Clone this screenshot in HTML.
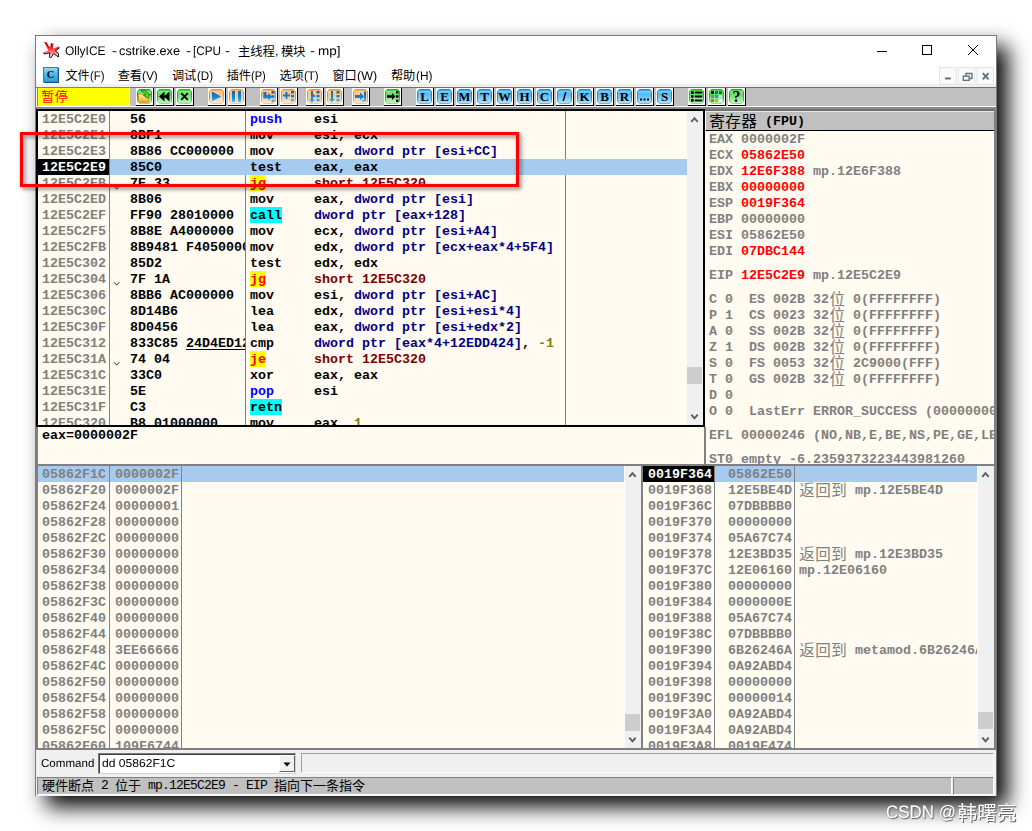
<!DOCTYPE html>
<html><head><meta charset="utf-8"><title>OllyICE</title>
<style>
html,body{margin:0;padding:0;background:#fff;}
body{width:1032px;height:831px;position:relative;overflow:hidden;font-family:"Liberation Sans",sans-serif;}
div,span{box-sizing:border-box;}
.abs,.abs>*{position:absolute;}
#shadow{position:absolute;left:35px;top:35px;width:962px;height:761px;}
#win{position:absolute;left:35px;top:35px;width:962px;height:761px;background:#f0f0f0;border:1px solid #7a7a7a;overflow:hidden;}
.p{position:absolute;}
.cjk{position:absolute;left:0;top:0;pointer-events:none;}
.cjk text{font-family:"Liberation Sans","Noto Sans CJK SC",sans-serif;}
.m{font-family:"Liberation Mono",monospace;font-weight:bold;font-size:13.333px;line-height:16px;white-space:pre;position:absolute;height:16px;letter-spacing:0;}
.row{position:absolute;left:0;height:16px;width:100%;}
.g{color:#808080}.k{color:#000}.r{color:#ff0000}.b{color:#0000ff}.n{color:#000080}.d{color:#800000}.o{color:#808000}.w{color:#fff}
.sans{font-family:"Liberation Sans",sans-serif;position:absolute;white-space:pre;text-rendering:geometricPrecision;font-kerning:none;}
.tb{position:absolute;top:88px;width:18px;height:18px;background:#fff;border-right:1px solid #000;border-bottom:1px solid #000;}
.tb>svg{position:absolute;left:1px;top:1px;}

</style></head><body>
<div id="shadow" style="box-shadow:11px 11px 20px rgba(0,0,0,0.97);"></div>
<div id="win"></div>
<div class="p" style="left:36px;top:36px;width:960px;height:27px;background:#fff;"></div>
<div class="p" style="left:36px;top:63px;width:960px;height:21px;background:#fff;"></div>
<div class="p" style="left:36px;top:84px;width:960px;height:3px;background:#f0f0f0;"></div>
<div class="p" style="left:36px;top:87px;width:960px;height:22px;background:#c0c0c0;border-top:1px solid #707070;"></div>
<div class="p" style="left:36px;top:106px;width:960px;height:1px;background:#fff;"></div>
<div class="p" style="left:36px;top:107px;width:960px;height:2px;background:#8c8c8c;"></div>
<svg class="p" style="left:43px;top:41px" width="18" height="18" viewBox="0 0 18 18">
<defs><linearGradient id="spl" x1="0" y1="0" x2="0" y2="1"><stop offset="0" stop-color="#ff0000"/><stop offset="0.4" stop-color="#ff2a2a"/><stop offset="0.75" stop-color="#ff9c9c"/><stop offset="1" stop-color="#ffecec"/></linearGradient></defs>
<path d="M1.500 1.200 L3.600 1.300 L6.800 7 L8.200 2.300 L10.300 2.500 L10 7.800 L15.800 5.400 L16.600 6.800 L12.400 9.800 L15.600 12.600 L15.400 16 L10.600 12.600 L8.200 16.600 L6.400 16.200 L6.800 11.800 L1.200 13 L0.800 11.400 L5.200 9.200 Z" fill="url(#spl)"/>
<path d="M16.600 6.800 L12.400 9.800 L15.600 12.600 L15.400 16 L10.600 12.600 L8.200 16.600 L6.400 16.200 L6.800 11.800 L1.200 13 L0.800 11.400" fill="none" stroke="#000" stroke-width="0.9" stroke-linejoin="round"/>
<path d="M1.500 1.200 L6.800 7 M8.200 2.300 L8.600 6" fill="none" stroke="#200" stroke-width="0.7"/>
</svg>
<span class="sans" style="left:65px;top:43px;font-size:12.5px;line-height:16.5px;color:#000;transform-origin:0 0;transform:scaleX(0.9560);">OllyICE</span><span class="sans" style="left:111.5px;top:43px;font-size:12.5px;line-height:16.5px;color:#000;transform-origin:0 0;transform:scaleX(1.2012);">-</span><span class="sans" style="left:119px;top:43px;font-size:12.5px;line-height:16.5px;color:#000;transform-origin:0 0;transform:scaleX(1.0211);">cstrike.exe</span><span class="sans" style="left:185.5px;top:43px;font-size:12.5px;line-height:16.5px;color:#000;transform-origin:0 0;transform:scaleX(1.2012);">-</span><span class="sans" style="left:193px;top:43px;font-size:12.5px;line-height:16.5px;color:#000;transform-origin:0 0;transform:scaleX(0.9376);">[CPU</span><span class="sans" style="left:224.5px;top:43px;font-size:12.5px;line-height:16.5px;color:#000;transform-origin:0 0;transform:scaleX(1.2012);">-</span><span class="sans" style="left:274.5px;top:43px;font-size:12.5px;line-height:16.5px;color:#000;transform-origin:0 0;transform:scaleX(1.0078);">,</span><span class="sans" style="left:309.5px;top:43px;font-size:12.5px;line-height:16.5px;color:#000;transform-origin:0 0;transform:scaleX(1.2012);">-</span><span class="sans" style="left:318px;top:43px;font-size:12.5px;line-height:16.5px;color:#000;transform-origin:0 0;transform:scaleX(1.0798);">mp]</span><svg class="p" style="left:860px;top:36px" width="136" height="27" viewBox="0 0 136 27" fill="none" stroke="#000" stroke-width="1">
<path d="M17 15.5h10"/><rect x="62.5" y="9.5" width="9" height="9"/><path d="M108 9 l10 10 M118 9 l-10 10"/></svg>
<svg class="p" style="left:43px;top:67px" width="16" height="16" viewBox="0 0 16 16">
<defs><linearGradient id="cic" x1="0" y1="0" x2="0" y2="1"><stop offset="0" stop-color="#9bd8f6"/><stop offset="0.5" stop-color="#4fb4ea"/><stop offset="1" stop-color="#2a9ee0"/></linearGradient></defs>
<rect x="1" y="1" width="15" height="15" fill="#10283c"/>
<rect x="0.5" y="0.5" width="14.500" height="14.500" fill="url(#cic)" stroke="#1585cc"/>
<text x="7.600" y="11.300" font-family="Liberation Serif" font-weight="bold" font-size="10.500" text-anchor="middle" fill="#06141e">C</text></svg>
<span class="sans" style="left:90.2px;top:68px;font-size:12.5px;line-height:16.5px;color:#000;transform-origin:0 0;transform:scaleX(0.9085);">(F)</span><span class="sans" style="left:142.4px;top:68px;font-size:12.5px;line-height:16.5px;color:#000;transform-origin:0 0;transform:scaleX(0.9482);">(V)</span><span class="sans" style="left:196.70000000000002px;top:68px;font-size:12.5px;line-height:16.5px;color:#000;transform-origin:0 0;transform:scaleX(0.9278);">(D)</span><span class="sans" style="left:251.4px;top:68px;font-size:12.5px;line-height:16.5px;color:#000;transform-origin:0 0;transform:scaleX(0.8882);">(P)</span><span class="sans" style="left:304.3px;top:68px;font-size:12.5px;line-height:16.5px;color:#000;transform-origin:0 0;transform:scaleX(0.9210);">(T)</span><span class="sans" style="left:357.1px;top:68px;font-size:12.5px;line-height:16.5px;color:#000;transform-origin:0 0;transform:scaleX(0.9988);">(W)</span><span class="sans" style="left:415.7px;top:68px;font-size:12.5px;line-height:16.5px;color:#000;transform-origin:0 0;transform:scaleX(0.9451);">(H)</span><svg class="p" style="left:939px;top:66px" width="57" height="20" viewBox="0 0 58 20">
<g fill="#fafafa" stroke="#e2e2e2"><rect x="0.5" y="1.5" width="17" height="17"/><rect x="19.5" y="1.5" width="17" height="17"/><rect x="38.5" y="1.5" width="17" height="17"/></g>
<g stroke="#5d7288" fill="none"><path d="M6 12.5h6" stroke-width="2"/><path d="M27.5 10.5v-3h6v5h-2" stroke-width="1.4"/><rect x="24.7" y="10.2" width="6" height="4.2" stroke-width="1.4"/><path d="M44.5 7l6 6.5M50.5 7l-6 6.5" stroke-width="2"/></g></svg>
<svg width="0" height="0" style="position:absolute"><defs><linearGradient id="blg" x1="0" y1="0" x2="0" y2="1"><stop offset="0" stop-color="#0668b8"/><stop offset="0.6" stop-color="#1088dc"/><stop offset="1" stop-color="#58c0f6"/></linearGradient></defs></svg><div class="p" style="left:37px;top:87px;width:93px;height:20px;background:#ffff00;border-top:1px solid #808080;border-left:1px solid #808080;border-bottom:1px solid #fff;border-right:1px solid #fff;"></div>
<div class="p" style="left:36px;top:88px;width:1px;height:18px;background:#fff;"></div>
<div class="tb" style="left:136px"><svg width="15" height="15" viewBox="0 0 15 15"><defs><linearGradient id="tg0" x1="0" y1="0" x2="0" y2="1"><stop offset="0" stop-color="#9ae69a"/><stop offset="0.35" stop-color="#6adb6a"/><stop offset="1" stop-color="#c4f6c4"/></linearGradient><linearGradient id="te0" x1="0" y1="0" x2="0" y2="1"><stop offset="0" stop-color="#0cc00c"/><stop offset="0.55" stop-color="#0cc00c"/><stop offset="1" stop-color="#86e486"/></linearGradient></defs><path d="M2.500 0.500h10l2 2v10l-2 2h-10l-2-2v-10z" fill="url(#tg0)" stroke="url(#te0)" stroke-width="1"/><path d="M2.300 0.200h10.400l1 1.300h-12.400z" fill="#0cc00c"/><g transform="translate(-0.5 -0.5)"><defs><linearGradient id="fld" x1="0" y1="0" x2="0" y2="1"><stop offset="0" stop-color="#fff2a8"/><stop offset="0.5" stop-color="#f8d060"/><stop offset="1" stop-color="#eaa426"/></linearGradient></defs><path d="M1.900 6.400q0-1 1-1h2.300l1 1.200h5.200q1 0 1 1v5.300q0 1-1 1h-8.500q-1 0-1-1z" fill="url(#fld)" stroke="#d08c14" stroke-width="0.9"/><path d="M5.200 1.500c3.500-0.300 6.300 1.600 6.900 4.600l1.900-0.400-2.900 4-3.900-2.900 2-0.400c-0.600-1.900-2-3.100-4.300-3.500z" fill="#5ad23a" stroke="#0e800e" stroke-width="0.9" stroke-linejoin="round"/></g></svg></div>
<div class="tb" style="left:156px"><svg width="15" height="15" viewBox="0 0 15 15"><defs><linearGradient id="tg1" x1="0" y1="0" x2="0" y2="1"><stop offset="0" stop-color="#9ae69a"/><stop offset="0.35" stop-color="#6adb6a"/><stop offset="1" stop-color="#c4f6c4"/></linearGradient><linearGradient id="te1" x1="0" y1="0" x2="0" y2="1"><stop offset="0" stop-color="#0cc00c"/><stop offset="0.55" stop-color="#0cc00c"/><stop offset="1" stop-color="#86e486"/></linearGradient></defs><path d="M2.500 0.500h10l2 2v10l-2 2h-10l-2-2v-10z" fill="url(#tg1)" stroke="url(#te1)" stroke-width="1"/><path d="M2.300 0.200h10.400l1 1.300h-12.400z" fill="#0cc00c"/><g transform="translate(-0.5 -0.5)"><path d="M8 3v10l-5.500-5zM13 3v10l-5.500-5z" fill="#000"/></g></svg></div>
<div class="tb" style="left:176px"><svg width="15" height="15" viewBox="0 0 15 15"><defs><linearGradient id="tg2" x1="0" y1="0" x2="0" y2="1"><stop offset="0" stop-color="#9ae69a"/><stop offset="0.35" stop-color="#6adb6a"/><stop offset="1" stop-color="#c4f6c4"/></linearGradient><linearGradient id="te2" x1="0" y1="0" x2="0" y2="1"><stop offset="0" stop-color="#0cc00c"/><stop offset="0.55" stop-color="#0cc00c"/><stop offset="1" stop-color="#86e486"/></linearGradient></defs><path d="M2.500 0.500h10l2 2v10l-2 2h-10l-2-2v-10z" fill="url(#tg2)" stroke="url(#te2)" stroke-width="1"/><path d="M2.300 0.200h10.400l1 1.300h-12.400z" fill="#0cc00c"/><g transform="translate(-0.5 -0.5)"><path d="M4.700 4.700l6.600 6.600M11.300 4.700l-6.600 6.600" stroke="#000" stroke-width="1.7"/></g></svg></div>
<div class="tb" style="left:208px"><svg width="15" height="15" viewBox="0 0 15 15"><defs><linearGradient id="tg3" x1="0" y1="0" x2="0" y2="1"><stop offset="0" stop-color="#fcd4a8"/><stop offset="0.35" stop-color="#fbc48c"/><stop offset="1" stop-color="#fde8d2"/></linearGradient><linearGradient id="te3" x1="0" y1="0" x2="0" y2="1"><stop offset="0" stop-color="#f0902c"/><stop offset="0.55" stop-color="#f0902c"/><stop offset="1" stop-color="#f8c890"/></linearGradient></defs><path d="M2.500 0.500h10l2 2v10l-2 2h-10l-2-2v-10z" fill="url(#tg3)" stroke="url(#te3)" stroke-width="1"/><path d="M2.300 0.200h10.400l1 1.300h-12.400z" fill="#f0902c"/><g transform="translate(-0.5 -0.5)"><path d="M3.500 3l9 5-9 5z" fill="url(#blg)"/></g></svg></div>
<div class="tb" style="left:228px"><svg width="15" height="15" viewBox="0 0 15 15"><defs><linearGradient id="tg4" x1="0" y1="0" x2="0" y2="1"><stop offset="0" stop-color="#fcd4a8"/><stop offset="0.35" stop-color="#fbc48c"/><stop offset="1" stop-color="#fde8d2"/></linearGradient><linearGradient id="te4" x1="0" y1="0" x2="0" y2="1"><stop offset="0" stop-color="#f0902c"/><stop offset="0.55" stop-color="#f0902c"/><stop offset="1" stop-color="#f8c890"/></linearGradient></defs><path d="M2.500 0.500h10l2 2v10l-2 2h-10l-2-2v-10z" fill="url(#tg4)" stroke="url(#te4)" stroke-width="1"/><path d="M2.300 0.200h10.400l1 1.300h-12.400z" fill="#f0902c"/><g transform="translate(-0.5 -0.5)"><path d="M3.500 2.500h3v11h-3zM9.500 2.500h3v11h-3z" fill="url(#blg)"/></g></svg></div>
<div class="tb" style="left:260px"><svg width="15" height="15" viewBox="0 0 15 15"><defs><linearGradient id="tg5" x1="0" y1="0" x2="0" y2="1"><stop offset="0" stop-color="#fcd4a8"/><stop offset="0.35" stop-color="#fbc48c"/><stop offset="1" stop-color="#fde8d2"/></linearGradient><linearGradient id="te5" x1="0" y1="0" x2="0" y2="1"><stop offset="0" stop-color="#f0902c"/><stop offset="0.55" stop-color="#f0902c"/><stop offset="1" stop-color="#f8c890"/></linearGradient></defs><path d="M2.500 0.500h10l2 2v10l-2 2h-10l-2-2v-10z" fill="url(#tg5)" stroke="url(#te5)" stroke-width="1"/><path d="M2.300 0.200h10.400l1 1.300h-12.400z" fill="#f0902c"/><g transform="translate(-0.5 -0.5)"><path d="M2.800 3.500h3.200v3h2v-2.500l3.300 4.200-3.300 4.200v-2.500h-5.200zM11 2.500h3v2.700h-3zM11 6.800h3v2.700h-3zM11 11h3v2.700h-3z" fill="url(#blg)"/></g></svg></div>
<div class="tb" style="left:280px"><svg width="15" height="15" viewBox="0 0 15 15"><defs><linearGradient id="tg6" x1="0" y1="0" x2="0" y2="1"><stop offset="0" stop-color="#fcd4a8"/><stop offset="0.35" stop-color="#fbc48c"/><stop offset="1" stop-color="#fde8d2"/></linearGradient><linearGradient id="te6" x1="0" y1="0" x2="0" y2="1"><stop offset="0" stop-color="#f0902c"/><stop offset="0.55" stop-color="#f0902c"/><stop offset="1" stop-color="#f8c890"/></linearGradient></defs><path d="M2.500 0.500h10l2 2v10l-2 2h-10l-2-2v-10z" fill="url(#tg6)" stroke="url(#te6)" stroke-width="1"/><path d="M2.300 0.200h10.400l1 1.300h-12.400z" fill="#f0902c"/><g transform="translate(-0.5 -0.5)"><path d="M5 3.500h2v2.500h2.500v2h-2.500v2.500h-2v-2.500h-2.500v-2h2.500zM10.500 2.500h3v2.500h-3zM10.500 6.500h3v2.500h-3zM10.500 10.500h3v2.500h-3z" fill="url(#blg)"/></g></svg></div>
<div class="tb" style="left:306px"><svg width="15" height="15" viewBox="0 0 15 15"><defs><linearGradient id="tg7" x1="0" y1="0" x2="0" y2="1"><stop offset="0" stop-color="#fcd4a8"/><stop offset="0.35" stop-color="#fbc48c"/><stop offset="1" stop-color="#fde8d2"/></linearGradient><linearGradient id="te7" x1="0" y1="0" x2="0" y2="1"><stop offset="0" stop-color="#f0902c"/><stop offset="0.55" stop-color="#f0902c"/><stop offset="1" stop-color="#f8c890"/></linearGradient></defs><path d="M2.500 0.500h10l2 2v10l-2 2h-10l-2-2v-10z" fill="url(#tg7)" stroke="url(#te7)" stroke-width="1"/><path d="M2.300 0.200h10.400l1 1.300h-12.400z" fill="#f0902c"/><g transform="translate(-0.5 -0.5)"><path d="M4.500 2.500h2v3l2.500 2-1 1.500-1.500-1v3h2l-3 3.500-3-3.500h2zM10 2.500h3v2.500h-3zM10 6.500h3v2.500h-3zM10 10.500h3v2.500h-3z" fill="url(#blg)"/></g></svg></div>
<div class="tb" style="left:326px"><svg width="15" height="15" viewBox="0 0 15 15"><defs><linearGradient id="tg8" x1="0" y1="0" x2="0" y2="1"><stop offset="0" stop-color="#fcd4a8"/><stop offset="0.35" stop-color="#fbc48c"/><stop offset="1" stop-color="#fde8d2"/></linearGradient><linearGradient id="te8" x1="0" y1="0" x2="0" y2="1"><stop offset="0" stop-color="#f0902c"/><stop offset="0.55" stop-color="#f0902c"/><stop offset="1" stop-color="#f8c890"/></linearGradient></defs><path d="M2.500 0.500h10l2 2v10l-2 2h-10l-2-2v-10z" fill="url(#tg8)" stroke="url(#te8)" stroke-width="1"/><path d="M2.300 0.200h10.400l1 1.300h-12.400z" fill="#f0902c"/><g transform="translate(-0.5 -0.5)"><path d="M4.500 2.500h2v8h2l-3 3.500-3-3.500h2zM10 2.500h3v2.500h-3zM10 6.500h3v2.500h-3zM10 10.500h3v2.500h-3z" fill="url(#blg)"/></g></svg></div>
<div class="tb" style="left:352px"><svg width="15" height="15" viewBox="0 0 15 15"><defs><linearGradient id="tg9" x1="0" y1="0" x2="0" y2="1"><stop offset="0" stop-color="#fcd4a8"/><stop offset="0.35" stop-color="#fbc48c"/><stop offset="1" stop-color="#fde8d2"/></linearGradient><linearGradient id="te9" x1="0" y1="0" x2="0" y2="1"><stop offset="0" stop-color="#f0902c"/><stop offset="0.55" stop-color="#f0902c"/><stop offset="1" stop-color="#f8c890"/></linearGradient></defs><path d="M2.500 0.500h10l2 2v10l-2 2h-10l-2-2v-10z" fill="url(#tg9)" stroke="url(#te9)" stroke-width="1"/><path d="M2.300 0.200h10.400l1 1.300h-12.400z" fill="#f0902c"/><g transform="translate(-0.5 -0.5)"><path d="M2.500 6.500h5v-2.500l4 4-4 4v-2.500h-5zM11.500 3h2v10h-4v-1.500h2z" fill="url(#blg)"/></g></svg></div>
<div class="tb" style="left:384px"><svg width="15" height="15" viewBox="0 0 15 15"><defs><linearGradient id="tg10" x1="0" y1="0" x2="0" y2="1"><stop offset="0" stop-color="#9ae69a"/><stop offset="0.35" stop-color="#6adb6a"/><stop offset="1" stop-color="#c4f6c4"/></linearGradient><linearGradient id="te10" x1="0" y1="0" x2="0" y2="1"><stop offset="0" stop-color="#0cc00c"/><stop offset="0.55" stop-color="#0cc00c"/><stop offset="1" stop-color="#86e486"/></linearGradient></defs><path d="M2.500 0.500h10l2 2v10l-2 2h-10l-2-2v-10z" fill="url(#tg10)" stroke="url(#te10)" stroke-width="1"/><path d="M2.300 0.200h10.400l1 1.300h-12.400z" fill="#0cc00c"/><g transform="translate(-0.5 -0.5)"><path d="M2.500 6.800h5v-2.300l3.500 3.500-3.500 3.500v-2.300h-5zM11.500 2.500h2.500v2.500h-2.500zM11.500 6.700h2.500v2.500h-2.500zM11.500 11h2.500v2.500h-2.500z" fill="#000"/></g></svg></div>
<div class="tb" style="left:416px"><svg width="15" height="15" viewBox="0 0 15 15"><defs><linearGradient id="tg11" x1="0" y1="0" x2="0" y2="1"><stop offset="0" stop-color="#8cd2f6"/><stop offset="0.35" stop-color="#56baf0"/><stop offset="1" stop-color="#b6e2fa"/></linearGradient><linearGradient id="te11" x1="0" y1="0" x2="0" y2="1"><stop offset="0" stop-color="#0f8cdc"/><stop offset="0.55" stop-color="#0f8cdc"/><stop offset="1" stop-color="#5cb8ee"/></linearGradient></defs><path d="M2.500 0.500h10l2 2v10l-2 2h-10l-2-2v-10z" fill="url(#tg11)" stroke="url(#te11)" stroke-width="1"/><path d="M2.300 0.200h10.400l1 1.300h-12.400z" fill="#0f8cdc"/><g transform="translate(-0.5 -0.5)"><text x="8" y="12.5" font-family="Liberation Serif" font-weight="bold" font-size="13" text-anchor="middle" fill="#000">L</text></g></svg></div>
<div class="tb" style="left:436px"><svg width="15" height="15" viewBox="0 0 15 15"><defs><linearGradient id="tg12" x1="0" y1="0" x2="0" y2="1"><stop offset="0" stop-color="#8cd2f6"/><stop offset="0.35" stop-color="#56baf0"/><stop offset="1" stop-color="#b6e2fa"/></linearGradient><linearGradient id="te12" x1="0" y1="0" x2="0" y2="1"><stop offset="0" stop-color="#0f8cdc"/><stop offset="0.55" stop-color="#0f8cdc"/><stop offset="1" stop-color="#5cb8ee"/></linearGradient></defs><path d="M2.500 0.500h10l2 2v10l-2 2h-10l-2-2v-10z" fill="url(#tg12)" stroke="url(#te12)" stroke-width="1"/><path d="M2.300 0.200h10.400l1 1.300h-12.400z" fill="#0f8cdc"/><g transform="translate(-0.5 -0.5)"><text x="8" y="12.5" font-family="Liberation Serif" font-weight="bold" font-size="13" text-anchor="middle" fill="#000">E</text></g></svg></div>
<div class="tb" style="left:456px"><svg width="15" height="15" viewBox="0 0 15 15"><defs><linearGradient id="tg13" x1="0" y1="0" x2="0" y2="1"><stop offset="0" stop-color="#8cd2f6"/><stop offset="0.35" stop-color="#56baf0"/><stop offset="1" stop-color="#b6e2fa"/></linearGradient><linearGradient id="te13" x1="0" y1="0" x2="0" y2="1"><stop offset="0" stop-color="#0f8cdc"/><stop offset="0.55" stop-color="#0f8cdc"/><stop offset="1" stop-color="#5cb8ee"/></linearGradient></defs><path d="M2.500 0.500h10l2 2v10l-2 2h-10l-2-2v-10z" fill="url(#tg13)" stroke="url(#te13)" stroke-width="1"/><path d="M2.300 0.200h10.400l1 1.300h-12.400z" fill="#0f8cdc"/><g transform="translate(-0.5 -0.5)"><text x="8" y="12.5" font-family="Liberation Serif" font-weight="bold" font-size="12.5" text-anchor="middle" fill="#000">M</text></g></svg></div>
<div class="tb" style="left:476px"><svg width="15" height="15" viewBox="0 0 15 15"><defs><linearGradient id="tg14" x1="0" y1="0" x2="0" y2="1"><stop offset="0" stop-color="#8cd2f6"/><stop offset="0.35" stop-color="#56baf0"/><stop offset="1" stop-color="#b6e2fa"/></linearGradient><linearGradient id="te14" x1="0" y1="0" x2="0" y2="1"><stop offset="0" stop-color="#0f8cdc"/><stop offset="0.55" stop-color="#0f8cdc"/><stop offset="1" stop-color="#5cb8ee"/></linearGradient></defs><path d="M2.500 0.500h10l2 2v10l-2 2h-10l-2-2v-10z" fill="url(#tg14)" stroke="url(#te14)" stroke-width="1"/><path d="M2.300 0.200h10.400l1 1.300h-12.400z" fill="#0f8cdc"/><g transform="translate(-0.5 -0.5)"><text x="8" y="12.5" font-family="Liberation Serif" font-weight="bold" font-size="13" text-anchor="middle" fill="#000">T</text></g></svg></div>
<div class="tb" style="left:496px"><svg width="15" height="15" viewBox="0 0 15 15"><defs><linearGradient id="tg15" x1="0" y1="0" x2="0" y2="1"><stop offset="0" stop-color="#8cd2f6"/><stop offset="0.35" stop-color="#56baf0"/><stop offset="1" stop-color="#b6e2fa"/></linearGradient><linearGradient id="te15" x1="0" y1="0" x2="0" y2="1"><stop offset="0" stop-color="#0f8cdc"/><stop offset="0.55" stop-color="#0f8cdc"/><stop offset="1" stop-color="#5cb8ee"/></linearGradient></defs><path d="M2.500 0.500h10l2 2v10l-2 2h-10l-2-2v-10z" fill="url(#tg15)" stroke="url(#te15)" stroke-width="1"/><path d="M2.300 0.200h10.400l1 1.300h-12.400z" fill="#0f8cdc"/><g transform="translate(-0.5 -0.5)"><text x="8" y="12.5" font-family="Liberation Serif" font-weight="bold" font-size="12.5" text-anchor="middle" fill="#000">W</text></g></svg></div>
<div class="tb" style="left:516px"><svg width="15" height="15" viewBox="0 0 15 15"><defs><linearGradient id="tg16" x1="0" y1="0" x2="0" y2="1"><stop offset="0" stop-color="#8cd2f6"/><stop offset="0.35" stop-color="#56baf0"/><stop offset="1" stop-color="#b6e2fa"/></linearGradient><linearGradient id="te16" x1="0" y1="0" x2="0" y2="1"><stop offset="0" stop-color="#0f8cdc"/><stop offset="0.55" stop-color="#0f8cdc"/><stop offset="1" stop-color="#5cb8ee"/></linearGradient></defs><path d="M2.500 0.500h10l2 2v10l-2 2h-10l-2-2v-10z" fill="url(#tg16)" stroke="url(#te16)" stroke-width="1"/><path d="M2.300 0.200h10.400l1 1.300h-12.400z" fill="#0f8cdc"/><g transform="translate(-0.5 -0.5)"><text x="8" y="12.5" font-family="Liberation Serif" font-weight="bold" font-size="13" text-anchor="middle" fill="#000">H</text></g></svg></div>
<div class="tb" style="left:536px"><svg width="15" height="15" viewBox="0 0 15 15"><defs><linearGradient id="tg17" x1="0" y1="0" x2="0" y2="1"><stop offset="0" stop-color="#8cd2f6"/><stop offset="0.35" stop-color="#56baf0"/><stop offset="1" stop-color="#b6e2fa"/></linearGradient><linearGradient id="te17" x1="0" y1="0" x2="0" y2="1"><stop offset="0" stop-color="#0f8cdc"/><stop offset="0.55" stop-color="#0f8cdc"/><stop offset="1" stop-color="#5cb8ee"/></linearGradient></defs><path d="M2.500 0.500h10l2 2v10l-2 2h-10l-2-2v-10z" fill="url(#tg17)" stroke="url(#te17)" stroke-width="1"/><path d="M2.300 0.200h10.400l1 1.300h-12.400z" fill="#0f8cdc"/><g transform="translate(-0.5 -0.5)"><text x="8" y="12.5" font-family="Liberation Serif" font-weight="bold" font-size="13" text-anchor="middle" fill="#000">C</text></g></svg></div>
<div class="tb" style="left:556px"><svg width="15" height="15" viewBox="0 0 15 15"><defs><linearGradient id="tg18" x1="0" y1="0" x2="0" y2="1"><stop offset="0" stop-color="#8cd2f6"/><stop offset="0.35" stop-color="#56baf0"/><stop offset="1" stop-color="#b6e2fa"/></linearGradient><linearGradient id="te18" x1="0" y1="0" x2="0" y2="1"><stop offset="0" stop-color="#0f8cdc"/><stop offset="0.55" stop-color="#0f8cdc"/><stop offset="1" stop-color="#5cb8ee"/></linearGradient></defs><path d="M2.500 0.500h10l2 2v10l-2 2h-10l-2-2v-10z" fill="url(#tg18)" stroke="url(#te18)" stroke-width="1"/><path d="M2.300 0.200h10.400l1 1.300h-12.400z" fill="#0f8cdc"/><g transform="translate(-0.5 -0.5)"><path d="M6 12.500l2.500-9h1.500l-2.500 9z" fill="#000"/></g></svg></div>
<div class="tb" style="left:576px"><svg width="15" height="15" viewBox="0 0 15 15"><defs><linearGradient id="tg19" x1="0" y1="0" x2="0" y2="1"><stop offset="0" stop-color="#8cd2f6"/><stop offset="0.35" stop-color="#56baf0"/><stop offset="1" stop-color="#b6e2fa"/></linearGradient><linearGradient id="te19" x1="0" y1="0" x2="0" y2="1"><stop offset="0" stop-color="#0f8cdc"/><stop offset="0.55" stop-color="#0f8cdc"/><stop offset="1" stop-color="#5cb8ee"/></linearGradient></defs><path d="M2.500 0.500h10l2 2v10l-2 2h-10l-2-2v-10z" fill="url(#tg19)" stroke="url(#te19)" stroke-width="1"/><path d="M2.300 0.200h10.400l1 1.300h-12.400z" fill="#0f8cdc"/><g transform="translate(-0.5 -0.5)"><text x="8" y="12.5" font-family="Liberation Serif" font-weight="bold" font-size="13" text-anchor="middle" fill="#000">K</text></g></svg></div>
<div class="tb" style="left:596px"><svg width="15" height="15" viewBox="0 0 15 15"><defs><linearGradient id="tg20" x1="0" y1="0" x2="0" y2="1"><stop offset="0" stop-color="#8cd2f6"/><stop offset="0.35" stop-color="#56baf0"/><stop offset="1" stop-color="#b6e2fa"/></linearGradient><linearGradient id="te20" x1="0" y1="0" x2="0" y2="1"><stop offset="0" stop-color="#0f8cdc"/><stop offset="0.55" stop-color="#0f8cdc"/><stop offset="1" stop-color="#5cb8ee"/></linearGradient></defs><path d="M2.500 0.500h10l2 2v10l-2 2h-10l-2-2v-10z" fill="url(#tg20)" stroke="url(#te20)" stroke-width="1"/><path d="M2.300 0.200h10.400l1 1.300h-12.400z" fill="#0f8cdc"/><g transform="translate(-0.5 -0.5)"><text x="8" y="12.5" font-family="Liberation Serif" font-weight="bold" font-size="13" text-anchor="middle" fill="#000">B</text></g></svg></div>
<div class="tb" style="left:616px"><svg width="15" height="15" viewBox="0 0 15 15"><defs><linearGradient id="tg21" x1="0" y1="0" x2="0" y2="1"><stop offset="0" stop-color="#8cd2f6"/><stop offset="0.35" stop-color="#56baf0"/><stop offset="1" stop-color="#b6e2fa"/></linearGradient><linearGradient id="te21" x1="0" y1="0" x2="0" y2="1"><stop offset="0" stop-color="#0f8cdc"/><stop offset="0.55" stop-color="#0f8cdc"/><stop offset="1" stop-color="#5cb8ee"/></linearGradient></defs><path d="M2.500 0.500h10l2 2v10l-2 2h-10l-2-2v-10z" fill="url(#tg21)" stroke="url(#te21)" stroke-width="1"/><path d="M2.300 0.200h10.400l1 1.300h-12.400z" fill="#0f8cdc"/><g transform="translate(-0.5 -0.5)"><text x="8" y="12.5" font-family="Liberation Serif" font-weight="bold" font-size="13" text-anchor="middle" fill="#000">R</text></g></svg></div>
<div class="tb" style="left:636px"><svg width="15" height="15" viewBox="0 0 15 15"><defs><linearGradient id="tg22" x1="0" y1="0" x2="0" y2="1"><stop offset="0" stop-color="#8cd2f6"/><stop offset="0.35" stop-color="#56baf0"/><stop offset="1" stop-color="#b6e2fa"/></linearGradient><linearGradient id="te22" x1="0" y1="0" x2="0" y2="1"><stop offset="0" stop-color="#0f8cdc"/><stop offset="0.55" stop-color="#0f8cdc"/><stop offset="1" stop-color="#5cb8ee"/></linearGradient></defs><path d="M2.500 0.500h10l2 2v10l-2 2h-10l-2-2v-10z" fill="url(#tg22)" stroke="url(#te22)" stroke-width="1"/><path d="M2.300 0.200h10.400l1 1.300h-12.400z" fill="#0f8cdc"/><g transform="translate(-0.5 -0.5)"><path d="M3.500 10h2v2h-2zM7 10h2v2h-2zM10.500 10h2v2h-2z" fill="#000"/></g></svg></div>
<div class="tb" style="left:656px"><svg width="15" height="15" viewBox="0 0 15 15"><defs><linearGradient id="tg23" x1="0" y1="0" x2="0" y2="1"><stop offset="0" stop-color="#8cd2f6"/><stop offset="0.35" stop-color="#56baf0"/><stop offset="1" stop-color="#b6e2fa"/></linearGradient><linearGradient id="te23" x1="0" y1="0" x2="0" y2="1"><stop offset="0" stop-color="#0f8cdc"/><stop offset="0.55" stop-color="#0f8cdc"/><stop offset="1" stop-color="#5cb8ee"/></linearGradient></defs><path d="M2.500 0.500h10l2 2v10l-2 2h-10l-2-2v-10z" fill="url(#tg23)" stroke="url(#te23)" stroke-width="1"/><path d="M2.300 0.200h10.400l1 1.300h-12.400z" fill="#0f8cdc"/><g transform="translate(-0.5 -0.5)"><text x="8" y="12.5" font-family="Liberation Serif" font-weight="bold" font-size="13" text-anchor="middle" fill="#000">S</text></g></svg></div>
<div class="tb" style="left:688px"><svg width="15" height="15" viewBox="0 0 15 15"><defs><linearGradient id="tg24" x1="0" y1="0" x2="0" y2="1"><stop offset="0" stop-color="#9ae69a"/><stop offset="0.35" stop-color="#6adb6a"/><stop offset="1" stop-color="#c4f6c4"/></linearGradient><linearGradient id="te24" x1="0" y1="0" x2="0" y2="1"><stop offset="0" stop-color="#0cc00c"/><stop offset="0.55" stop-color="#0cc00c"/><stop offset="1" stop-color="#86e486"/></linearGradient></defs><path d="M2.500 0.500h10l2 2v10l-2 2h-10l-2-2v-10z" fill="url(#tg24)" stroke="url(#te24)" stroke-width="1"/><path d="M2.300 0.200h10.400l1 1.300h-12.400z" fill="#0cc00c"/><g transform="translate(-0.5 -0.5)"><path d="M2.500 2.800h2.600v2.600h-2.600zM2.500 6.700h2.600v2.600h-2.600zM2.500 10.600h2.600v2.600h-2.600zM6.300 3.100h7.500v2h-7.500zM6.300 7h7.500v2h-7.500zM6.300 10.900h7.500v2h-7.500z" fill="#000"/></g></svg></div>
<div class="tb" style="left:708px"><svg width="15" height="15" viewBox="0 0 15 15"><defs><linearGradient id="tg25" x1="0" y1="0" x2="0" y2="1"><stop offset="0" stop-color="#9ae69a"/><stop offset="0.35" stop-color="#6adb6a"/><stop offset="1" stop-color="#c4f6c4"/></linearGradient><linearGradient id="te25" x1="0" y1="0" x2="0" y2="1"><stop offset="0" stop-color="#0cc00c"/><stop offset="0.55" stop-color="#0cc00c"/><stop offset="1" stop-color="#86e486"/></linearGradient></defs><path d="M2.500 0.500h10l2 2v10l-2 2h-10l-2-2v-10z" fill="url(#tg25)" stroke="url(#te25)" stroke-width="1"/><path d="M2.300 0.200h10.400l1 1.300h-12.400z" fill="#0cc00c"/><g transform="translate(-0.5 -0.5)"><g><rect x="2.500" y="2.500" width="3" height="3" fill="#000"/><rect x="6.500" y="2.500" width="3" height="3" fill="#1560d0"/><rect x="10.500" y="2.500" width="3" height="3" fill="#008000"/><rect x="2.500" y="6.500" width="3" height="3" fill="#808080"/><rect x="6.500" y="6.500" width="3" height="3" fill="#109cf0"/><rect x="10.500" y="6.500" width="3" height="3" fill="#b0e0ff"/><rect x="2.500" y="10.500" width="3" height="3" fill="#f05010"/><rect x="6.500" y="10.500" width="3" height="3" fill="#ffa000"/><rect x="10.500" y="10.500" width="3" height="3" fill="#fff"/></g></g></svg></div>
<div class="tb" style="left:728px"><svg width="15" height="15" viewBox="0 0 15 15"><defs><linearGradient id="tg26" x1="0" y1="0" x2="0" y2="1"><stop offset="0" stop-color="#9ae69a"/><stop offset="0.35" stop-color="#6adb6a"/><stop offset="1" stop-color="#c4f6c4"/></linearGradient><linearGradient id="te26" x1="0" y1="0" x2="0" y2="1"><stop offset="0" stop-color="#0cc00c"/><stop offset="0.55" stop-color="#0cc00c"/><stop offset="1" stop-color="#86e486"/></linearGradient></defs><path d="M2.500 0.500h10l2 2v10l-2 2h-10l-2-2v-10z" fill="url(#tg26)" stroke="url(#te26)" stroke-width="1"/><path d="M2.300 0.200h10.400l1 1.300h-12.400z" fill="#0cc00c"/><g transform="translate(-0.5 -0.5)"><text x="8" y="13.4" font-family="Liberation Serif" font-weight="bold" font-size="16" text-anchor="middle" fill="#000">?</text></g></svg></div>
<div class="p" style="left:36px;top:109px;width:669px;height:318px;background:#fffbf0;border:2px solid #000;"></div>
<div class="p" style="left:109px;top:111px;width:1px;height:314px;background:#808080;"></div>
<div class="p" style="left:245px;top:111px;width:1px;height:314px;background:#808080;"></div>
<div class="p" style="left:565px;top:111px;width:1px;height:314px;background:#808080;"></div>
<div class="p" style="left:110px;top:159px;width:577px;height:16px;background:#a6caf0;"></div>
<div class="p" style="left:38px;top:159px;width:71px;height:16px;background:#000;"></div>
<div class="p" style="left:687px;top:111px;width:16px;height:314px;background:#f0f0f0;"></div>
<div class="p" style="left:687px;top:367px;width:15px;height:17px;background:#cdcdcd;"></div>
<svg class="p" style="left:687px;top:111px" width="16" height="314" viewBox="0 0 16 314" fill="none" stroke="#5a5a5a" stroke-width="1.9"><path d="M4.3 10.900L7.5 7.200L10.7 10.900"/><path d="M4.3 303.7L7.5 307.4L10.7 303.7"/></svg>
<div class="p" style="left:38px;top:111px;width:649px;height:314px;overflow:hidden;">
<span class="m g" style="left:4px;top:1px;">12E5C2E0</span><span class="m k" style="left:92px;top:1px;width:115px;overflow:hidden;">56</span><span class="m b" style="left:212px;top:1px;">push</span><span class="m k" style="left:276px;top:1px;width:251px;overflow:hidden;">esi</span>
<span class="m g" style="left:4px;top:17px;">12E5C2E1</span><span class="m k" style="left:92px;top:17px;width:115px;overflow:hidden;">8BF1</span><span class="m k" style="left:212px;top:17px;">mov</span><span class="m k" style="left:276px;top:17px;width:251px;overflow:hidden;">esi, ecx</span>
<span class="m g" style="left:4px;top:33px;">12E5C2E3</span><span class="m k" style="left:92px;top:33px;width:115px;overflow:hidden;">8B86 CC000000</span><span class="m k" style="left:212px;top:33px;">mov</span><span class="m k" style="left:276px;top:33px;width:251px;overflow:hidden;">eax, </span><span class="m n" style="left:316px;top:33px;width:211px;overflow:hidden;">dword ptr [esi+CC]</span>
<span class="m w" style="left:4px;top:49px;">12E5C2E9</span><span class="m k" style="left:92px;top:49px;width:115px;overflow:hidden;">85C0</span><span class="m k" style="left:212px;top:49px;">test</span><span class="m k" style="left:276px;top:49px;width:251px;overflow:hidden;">eax, eax</span>
<span class="m g" style="left:4px;top:65px;">12E5C2EB</span><svg class="p" style="left:75px;top:74px" width="8" height="6" viewBox="0 0 8 6" fill="none" stroke="#303030" stroke-width="1"><path d="M1 1.200l2.700 3 2.700-3"/></svg><span class="m k" style="left:92px;top:65px;width:115px;overflow:hidden;">7E 33</span><div class="p" style="left:212px;top:64px;width:16px;height:16px;background:#ffff00;"></div><span class="m r" style="left:212px;top:65px;">jg</span><span class="m d" style="left:276px;top:65px;width:251px;overflow:hidden;">short 12E5C320</span>
<span class="m g" style="left:4px;top:81px;">12E5C2ED</span><span class="m k" style="left:92px;top:81px;width:115px;overflow:hidden;">8B06</span><span class="m k" style="left:212px;top:81px;">mov</span><span class="m k" style="left:276px;top:81px;width:251px;overflow:hidden;">eax, </span><span class="m n" style="left:316px;top:81px;width:211px;overflow:hidden;">dword ptr [esi]</span>
<span class="m g" style="left:4px;top:97px;">12E5C2EF</span><span class="m k" style="left:92px;top:97px;width:115px;overflow:hidden;">FF90 28010000</span><div class="p" style="left:212px;top:96px;width:32px;height:16px;background:#00ffff;"></div><span class="m k" style="left:212px;top:97px;">call</span><span class="m n" style="left:276px;top:97px;width:251px;overflow:hidden;">dword ptr [eax+128]</span>
<span class="m g" style="left:4px;top:113px;">12E5C2F5</span><span class="m k" style="left:92px;top:113px;width:115px;overflow:hidden;">8B8E A4000000</span><span class="m k" style="left:212px;top:113px;">mov</span><span class="m k" style="left:276px;top:113px;width:251px;overflow:hidden;">ecx, </span><span class="m n" style="left:316px;top:113px;width:211px;overflow:hidden;">dword ptr [esi+A4]</span>
<span class="m g" style="left:4px;top:129px;">12E5C2FB</span><span class="m k" style="left:92px;top:129px;width:115px;overflow:hidden;">8B9481 F4050000</span><span class="m k" style="left:212px;top:129px;">mov</span><span class="m k" style="left:276px;top:129px;width:251px;overflow:hidden;">edx, </span><span class="m n" style="left:316px;top:129px;width:211px;overflow:hidden;">dword ptr [ecx+eax*4+5F4]</span>
<span class="m g" style="left:4px;top:145px;">12E5C302</span><span class="m k" style="left:92px;top:145px;width:115px;overflow:hidden;">85D2</span><span class="m k" style="left:212px;top:145px;">test</span><span class="m k" style="left:276px;top:145px;width:251px;overflow:hidden;">edx, edx</span>
<span class="m g" style="left:4px;top:161px;">12E5C304</span><svg class="p" style="left:75px;top:170px" width="8" height="6" viewBox="0 0 8 6" fill="none" stroke="#303030" stroke-width="1"><path d="M1 1.200l2.700 3 2.700-3"/></svg><span class="m k" style="left:92px;top:161px;width:115px;overflow:hidden;">7F 1A</span><div class="p" style="left:212px;top:160px;width:16px;height:16px;background:#ffff00;"></div><span class="m r" style="left:212px;top:161px;">jg</span><span class="m d" style="left:276px;top:161px;width:251px;overflow:hidden;">short 12E5C320</span>
<span class="m g" style="left:4px;top:177px;">12E5C306</span><span class="m k" style="left:92px;top:177px;width:115px;overflow:hidden;">8BB6 AC000000</span><span class="m k" style="left:212px;top:177px;">mov</span><span class="m k" style="left:276px;top:177px;width:251px;overflow:hidden;">esi, </span><span class="m n" style="left:316px;top:177px;width:211px;overflow:hidden;">dword ptr [esi+AC]</span>
<span class="m g" style="left:4px;top:193px;">12E5C30C</span><span class="m k" style="left:92px;top:193px;width:115px;overflow:hidden;">8D14B6</span><span class="m k" style="left:212px;top:193px;">lea</span><span class="m k" style="left:276px;top:193px;width:251px;overflow:hidden;">edx, </span><span class="m n" style="left:316px;top:193px;width:211px;overflow:hidden;">dword ptr [esi+esi*4]</span>
<span class="m g" style="left:4px;top:209px;">12E5C30F</span><span class="m k" style="left:92px;top:209px;width:115px;overflow:hidden;">8D0456</span><span class="m k" style="left:212px;top:209px;">lea</span><span class="m k" style="left:276px;top:209px;width:251px;overflow:hidden;">eax, </span><span class="m n" style="left:316px;top:209px;width:211px;overflow:hidden;">dword ptr [esi+edx*2]</span>
<span class="m g" style="left:4px;top:225px;">12E5C312</span><span class="m k" style="left:92px;top:225px;width:115px;overflow:hidden;">833C85 <span style="text-decoration:underline;text-underline-offset:2px;text-decoration-thickness:1px;">24D4ED12</span> 00</span><span class="m k" style="left:212px;top:225px;">cmp</span><span class="m n" style="left:276px;top:225px;width:251px;overflow:hidden;">dword ptr [eax*4+12EDD424]</span><span class="m k" style="left:484px;top:225px;width:43px;overflow:hidden;">, </span><span class="m o" style="left:500px;top:225px;width:27px;overflow:hidden;">-1</span>
<span class="m g" style="left:4px;top:241px;">12E5C31A</span><svg class="p" style="left:75px;top:250px" width="8" height="6" viewBox="0 0 8 6" fill="none" stroke="#303030" stroke-width="1"><path d="M1 1.200l2.700 3 2.700-3"/></svg><span class="m k" style="left:92px;top:241px;width:115px;overflow:hidden;">74 04</span><div class="p" style="left:212px;top:240px;width:16px;height:16px;background:#ffff00;"></div><span class="m r" style="left:212px;top:241px;">je</span><span class="m d" style="left:276px;top:241px;width:251px;overflow:hidden;">short 12E5C320</span>
<span class="m g" style="left:4px;top:257px;">12E5C31C</span><span class="m k" style="left:92px;top:257px;width:115px;overflow:hidden;">33C0</span><span class="m k" style="left:212px;top:257px;">xor</span><span class="m k" style="left:276px;top:257px;width:251px;overflow:hidden;">eax, eax</span>
<span class="m g" style="left:4px;top:273px;">12E5C31E</span><span class="m k" style="left:92px;top:273px;width:115px;overflow:hidden;">5E</span><span class="m b" style="left:212px;top:273px;">pop</span><span class="m k" style="left:276px;top:273px;width:251px;overflow:hidden;">esi</span>
<span class="m g" style="left:4px;top:289px;">12E5C31F</span><span class="m k" style="left:92px;top:289px;width:115px;overflow:hidden;">C3</span><div class="p" style="left:212px;top:288px;width:32px;height:16px;background:#00ffff;"></div><span class="m k" style="left:212px;top:289px;">retn</span>
<span class="m g" style="left:4px;top:305px;">12E5C320</span><span class="m k" style="left:92px;top:305px;width:115px;overflow:hidden;">B8 01000000</span><span class="m k" style="left:212px;top:305px;">mov</span><span class="m k" style="left:276px;top:305px;width:251px;overflow:hidden;">eax, </span><span class="m o" style="left:316px;top:305px;width:211px;overflow:hidden;">1</span>
</div>
<div class="p" style="left:36px;top:427px;width:668px;height:37px;background:#fffbf0;border-left:2px solid #808080;"></div>
<span class="m k" style="left:42px;top:428px;">eax=0000002F</span><div class="p" style="left:704px;top:109px;width:292px;height:355px;background:#fffbf0;border-left:2px solid #808080;border-top:2px solid #707070;"></div>
<div class="p" style="left:705px;top:131px;width:1px;height:296px;background:#fffbf0;"></div>
<div class="p" style="left:703px;top:109px;width:2px;height:318px;background:#000;"></div>
<div class="p" style="left:706px;top:111px;width:288px;height:19px;background:#c0c0c0;"></div>
<div class="p" style="left:706px;top:130px;width:288px;height:1px;background:#000;"></div>
<div class="p" style="left:705px;top:111px;width:1px;height:19px;background:#fff;"></div>
<div class="p" style="left:705px;top:111px;width:289px;height:1px;background:#e8e8e8;"></div>
<div class="p" style="left:994px;top:109px;width:2px;height:355px;background:#808080;"></div>
<div class="p" style="left:706px;top:109px;width:288px;height:355px;overflow:hidden;">
<span class="m k" style="left:51px;top:5px;"> (FPU)</span><span class="m g" style="left:3px;top:23px;">EAX 0000002F</span>
<span class="m g" style="left:3px;top:39px;">ECX </span><span class="m r" style="left:35px;top:39px;">05862E50</span>
<span class="m g" style="left:3px;top:55px;">EDX </span><span class="m r" style="left:35px;top:55px;">12E6F388</span><span class="m g" style="left:99px;top:55px;"> mp.12E6F388</span>
<span class="m g" style="left:3px;top:71px;">EBX </span><span class="m r" style="left:35px;top:71px;">00000000</span>
<span class="m g" style="left:3px;top:87px;">ESP </span><span class="m r" style="left:35px;top:87px;">0019F364</span>
<span class="m g" style="left:3px;top:103px;">EBP 00000000</span>
<span class="m g" style="left:3px;top:119px;">ESI 05862E50</span>
<span class="m g" style="left:3px;top:135px;">EDI </span><span class="m r" style="left:35px;top:135px;">07DBC144</span>
<span class="m g" style="left:3px;top:159px;">EIP </span><span class="m r" style="left:35px;top:159px;">12E5C2E9</span><span class="m g" style="left:99px;top:159px;"> mp.12E5C2E9</span>
<span class="m g" style="left:3px;top:183px;">C 0  ES 002B 32</span><span class="m g" style="left:139px;top:183px;"> 0(FFFFFFFF)</span>
<span class="m g" style="left:3px;top:199px;">P 1  CS 0023 32</span><span class="m g" style="left:139px;top:199px;"> 0(FFFFFFFF)</span>
<span class="m g" style="left:3px;top:215px;">A 0  SS 002B 32</span><span class="m g" style="left:139px;top:215px;"> 0(FFFFFFFF)</span>
<span class="m g" style="left:3px;top:231px;">Z 1  DS 002B 32</span><span class="m g" style="left:139px;top:231px;"> 0(FFFFFFFF)</span>
<span class="m g" style="left:3px;top:247px;">S 0  FS 0053 32</span><span class="m g" style="left:139px;top:247px;"> 2C9000(FFF)</span>
<span class="m g" style="left:3px;top:263px;">T 0  GS 002B 32</span><span class="m g" style="left:139px;top:263px;"> 0(FFFFFFFF)</span>
<span class="m g" style="left:3px;top:279px;">D 0</span>
<span class="m g" style="left:3px;top:295px;">O 0  LastErr ERROR_SUCCESS (00000000)</span>
<span class="m g" style="left:3px;top:319px;">EFL 00000246 (NO,NB,E,BE,NS,PE,GE,LE)</span>
<span class="m g" style="left:3px;top:343px;">ST0 empty -6.2359373223443981260</span>
</div>
<div class="p" style="left:36px;top:464px;width:605px;height:286px;background:#fffbf0;border-left:2px solid #808080;border-top:2px solid #808080;border-bottom:2px solid #808080;"></div>
<div class="p" style="left:38px;top:466px;width:586px;height:16px;background:#a6caf0;"></div>
<div class="p" style="left:109px;top:466px;width:1px;height:282px;background:#808080;"></div>
<div class="p" style="left:181px;top:466px;width:1px;height:282px;background:#808080;"></div>
<div class="p" style="left:625px;top:466px;width:16px;height:282px;background:#f0f0f0;"></div>
<div class="p" style="left:625px;top:714px;width:15px;height:17px;background:#cdcdcd;"></div>
<svg class="p" style="left:625px;top:466px" width="16" height="282" viewBox="0 0 16 282" fill="none" stroke="#5a5a5a" stroke-width="1.9"><path d="M4.3 10.900L7.5 7.200L10.7 10.900"/><path d="M4.3 271.7L7.5 275.4L10.7 271.7"/></svg>
<div class="p" style="left:38px;top:466px;width:586px;height:282px;overflow:hidden;">
<span class="m g" style="left:4px;top:1px;">05862F1C</span><span class="m g" style="left:77px;top:1px;">0000002F</span><span class="m g" style="left:4px;top:17px;">05862F20</span><span class="m g" style="left:77px;top:17px;">0000002F</span><span class="m g" style="left:4px;top:33px;">05862F24</span><span class="m g" style="left:77px;top:33px;">00000001</span><span class="m g" style="left:4px;top:49px;">05862F28</span><span class="m g" style="left:77px;top:49px;">00000000</span><span class="m g" style="left:4px;top:65px;">05862F2C</span><span class="m g" style="left:77px;top:65px;">00000000</span><span class="m g" style="left:4px;top:81px;">05862F30</span><span class="m g" style="left:77px;top:81px;">00000000</span><span class="m g" style="left:4px;top:97px;">05862F34</span><span class="m g" style="left:77px;top:97px;">00000000</span><span class="m g" style="left:4px;top:113px;">05862F38</span><span class="m g" style="left:77px;top:113px;">00000000</span><span class="m g" style="left:4px;top:129px;">05862F3C</span><span class="m g" style="left:77px;top:129px;">00000000</span><span class="m g" style="left:4px;top:145px;">05862F40</span><span class="m g" style="left:77px;top:145px;">00000000</span><span class="m g" style="left:4px;top:161px;">05862F44</span><span class="m g" style="left:77px;top:161px;">00000000</span><span class="m g" style="left:4px;top:177px;">05862F48</span><span class="m g" style="left:77px;top:177px;">3EE66666</span><span class="m g" style="left:4px;top:193px;">05862F4C</span><span class="m g" style="left:77px;top:193px;">00000000</span><span class="m g" style="left:4px;top:209px;">05862F50</span><span class="m g" style="left:77px;top:209px;">00000000</span><span class="m g" style="left:4px;top:225px;">05862F54</span><span class="m g" style="left:77px;top:225px;">00000000</span><span class="m g" style="left:4px;top:241px;">05862F58</span><span class="m g" style="left:77px;top:241px;">00000000</span><span class="m g" style="left:4px;top:257px;">05862F5C</span><span class="m g" style="left:77px;top:257px;">00000000</span><span class="m g" style="left:4px;top:273px;">05862F60</span><span class="m g" style="left:77px;top:273px;">109F6744</span></div>
<div class="p" style="left:641px;top:464px;width:355px;height:286px;background:#fffbf0;border-left:2px solid #808080;border-top:2px solid #808080;border-bottom:2px solid #808080;"></div>
<div class="p" style="left:994px;top:464px;width:2px;height:286px;background:#808080;"></div>
<div class="p" style="left:643px;top:466px;width:334px;height:16px;background:#a6caf0;"></div>
<div class="p" style="left:643px;top:466px;width:71px;height:16px;background:#000;"></div>
<div class="p" style="left:714px;top:466px;width:1px;height:282px;background:#808080;"></div>
<div class="p" style="left:794px;top:466px;width:1px;height:282px;background:#808080;"></div>
<div class="p" style="left:978px;top:466px;width:16px;height:282px;background:#f0f0f0;"></div>
<div class="p" style="left:978px;top:712px;width:15px;height:17px;background:#cdcdcd;"></div>
<svg class="p" style="left:978px;top:466px" width="16" height="282" viewBox="0 0 16 282" fill="none" stroke="#5a5a5a" stroke-width="1.9"><path d="M4.3 10.900L7.5 7.200L10.7 10.900"/><path d="M4.3 271.7L7.5 275.4L10.7 271.7"/></svg>
<div class="p" style="left:643px;top:466px;width:334px;height:282px;overflow:hidden;">
<span class="m w" style="left:5px;top:1px;">0019F364</span><span class="m g" style="left:85px;top:1px;">05862E50</span><span class="m g" style="left:5px;top:17px;">0019F368</span><span class="m g" style="left:85px;top:17px;">12E5BE4D</span><span class="m g" style="left:204px;top:17px;"> mp.12E5BE4D</span><span class="m g" style="left:5px;top:33px;">0019F36C</span><span class="m g" style="left:85px;top:33px;">07DBBBB0</span><span class="m g" style="left:5px;top:49px;">0019F370</span><span class="m g" style="left:85px;top:49px;">00000000</span><span class="m g" style="left:5px;top:65px;">0019F374</span><span class="m g" style="left:85px;top:65px;">05A67C74</span><span class="m g" style="left:5px;top:81px;">0019F378</span><span class="m g" style="left:85px;top:81px;">12E3BD35</span><span class="m g" style="left:204px;top:81px;"> mp.12E3BD35</span><span class="m g" style="left:5px;top:97px;">0019F37C</span><span class="m g" style="left:85px;top:97px;">12E06160</span><span class="m g" style="left:156px;top:97px;">mp.12E06160</span><span class="m g" style="left:5px;top:113px;">0019F380</span><span class="m g" style="left:85px;top:113px;">00000000</span><span class="m g" style="left:5px;top:129px;">0019F384</span><span class="m g" style="left:85px;top:129px;">0000000E</span><span class="m g" style="left:5px;top:145px;">0019F388</span><span class="m g" style="left:85px;top:145px;">05A67C74</span><span class="m g" style="left:5px;top:161px;">0019F38C</span><span class="m g" style="left:85px;top:161px;">07DBBBB0</span><span class="m g" style="left:5px;top:177px;">0019F390</span><span class="m g" style="left:85px;top:177px;">6B26246A</span><span class="m g" style="left:204px;top:177px;"> metamod.6B26246A</span><span class="m g" style="left:5px;top:193px;">0019F394</span><span class="m g" style="left:85px;top:193px;">0A92ABD4</span><span class="m g" style="left:5px;top:209px;">0019F398</span><span class="m g" style="left:85px;top:209px;">00000000</span><span class="m g" style="left:5px;top:225px;">0019F39C</span><span class="m g" style="left:85px;top:225px;">00000014</span><span class="m g" style="left:5px;top:241px;">0019F3A0</span><span class="m g" style="left:85px;top:241px;">0A92ABD4</span><span class="m g" style="left:5px;top:257px;">0019F3A4</span><span class="m g" style="left:85px;top:257px;">0A92ABD4</span><span class="m g" style="left:5px;top:273px;">0019F3A8</span><span class="m g" style="left:85px;top:273px;">0019F474</span></div>
<div class="p" style="left:36px;top:750px;width:960px;height:27px;background:#f0f0f0;"></div>
<span class="sans" style="left:41.2px;top:757px;font-size:11.5px;line-height:15.5px;color:#000;transform-origin:0 0;transform:scaleX(1.0067);">Command</span><div class="p" style="left:98px;top:753px;width:198px;height:21px;background:#fff;border:1px solid #7a7a7a;border-right-color:#d0d0d0;border-bottom-color:#d0d0d0;box-shadow:inset 1px 1px 0 #404040;"></div>
<span class="sans" style="left:102.2px;top:757px;font-size:11.5px;line-height:15.5px;color:#000;transform-origin:0 0;transform:scaleX(1.0504);">dd 05862F1C</span><div class="p" style="left:279px;top:755px;width:16px;height:17px;background:#f0f0f0;border:1px solid #fff;border-right-color:#606060;border-bottom-color:#606060;"></div>
<svg class="p" style="left:283px;top:762px" width="8" height="5" viewBox="0 0 8 5"><path d="M0.500 0.500h7l-3.500 4z" fill="#000"/></svg><div class="p" style="left:301px;top:753px;width:693px;height:20px;background:#f0f0f0;border:1px solid #a0a0a0;border-right-color:#fff;border-bottom-color:#fff;"></div>
<div class="p" style="left:36px;top:776px;width:960px;height:20px;background:#f0f0f0;"></div>
<div class="p" style="left:37px;top:777px;width:915px;height:18px;background:#c0c0c0;border:1px solid #808080;border-right-color:#fff;border-bottom-color:#fff;"></div>
<div class="p" style="left:953px;top:777px;width:41px;height:18px;background:#c0c0c0;border:1px solid #808080;border-right-color:#fff;border-bottom-color:#fff;"></div>
<span class="p" style="left:94px;top:778px;font-family:'Liberation Mono',monospace;font-size:13px;letter-spacing:-0.8px;line-height:15px;white-space:pre;color:#000;"> 2 </span><span class="p" style="left:141px;top:778px;font-family:'Liberation Mono',monospace;font-size:13px;letter-spacing:-0.8px;line-height:15px;white-space:pre;color:#000;"> mp.12E5C2E9 - EIP </span><div class="p" style="left:20px;top:132px;width:499px;height:55px;border:3px solid #ff0000;filter:drop-shadow(2px 2px 2px rgba(0,0,0,0.55));"></div>
<span class="sans" style="left:886px;top:800px;font-size:18px;line-height:24px;color:#fff;text-shadow:1px 1px 1px #666,0 0 2px #999;transform-origin:0 0;transform:scaleX(0.942);">CSDN @</span><svg class="cjk" width="1032" height="831" viewBox="0 0 1032 831">
<text x="238 250.3 262.6 281 293" y="55.7" font-size="12.4" fill="#000">主线程模块</text>
<text x="65.5 77.5" y="80.4" font-size="12.2" fill="#000">文件</text>
<text x="117.7 129.7" y="80.4" font-size="12.2" fill="#000">查看</text>
<text x="172 184" y="80.4" font-size="12.2" fill="#000">调试</text>
<text x="226.7 238.7" y="80.4" font-size="12.2" fill="#000">插件</text>
<text x="279.6 291.6" y="80.4" font-size="12.2" fill="#000">选项</text>
<text x="332.4 344.4" y="80.4" font-size="12.2" fill="#000">窗口</text>
<text x="391 403" y="80.4" font-size="12.2" fill="#000">帮助</text>
<text x="41.2 54.7" y="101" font-size="13" fill="#ff0000">暂停</text>
<text x="709.3 725.3 741.3" y="126.8" font-size="15.7" fill="#000">寄存器</text>
<text x="829.5" y="305.1" font-size="15.5" fill="#808080">位</text>
<text x="829.5" y="321.1" font-size="15.5" fill="#808080">位</text>
<text x="829.5" y="337.1" font-size="15.5" fill="#808080">位</text>
<text x="829.5" y="353.1" font-size="15.5" fill="#808080">位</text>
<text x="829.5" y="369.1" font-size="15.5" fill="#808080">位</text>
<text x="829.5" y="385.1" font-size="15.5" fill="#808080">位</text>
<text x="799.3 815.3 831.3" y="495.9" font-size="15.5" fill="#808080">返回到</text>
<text x="799.3 815.3 831.3" y="559.9" font-size="15.5" fill="#808080">返回到</text>
<text x="799.3 815.3 831.3" y="655.9" font-size="15.5" fill="#808080">返回到</text>
<text x="42 55 68 81" y="790.4" font-size="13" fill="#000">硬件断点</text>
<text x="115 128" y="790.4" font-size="13" fill="#000">位于</text>
<text x="274 287 300 313 326 339 352" y="790.4" font-size="13" fill="#000">指向下一条指令</text>
<g style="filter:drop-shadow(1px 1px 0.6px #666)"><text x="957.5 977.3 997.1" y="819.7" font-size="19.5" fill="#fff">韩曙亮</text></g>
</svg>
</body></html>
